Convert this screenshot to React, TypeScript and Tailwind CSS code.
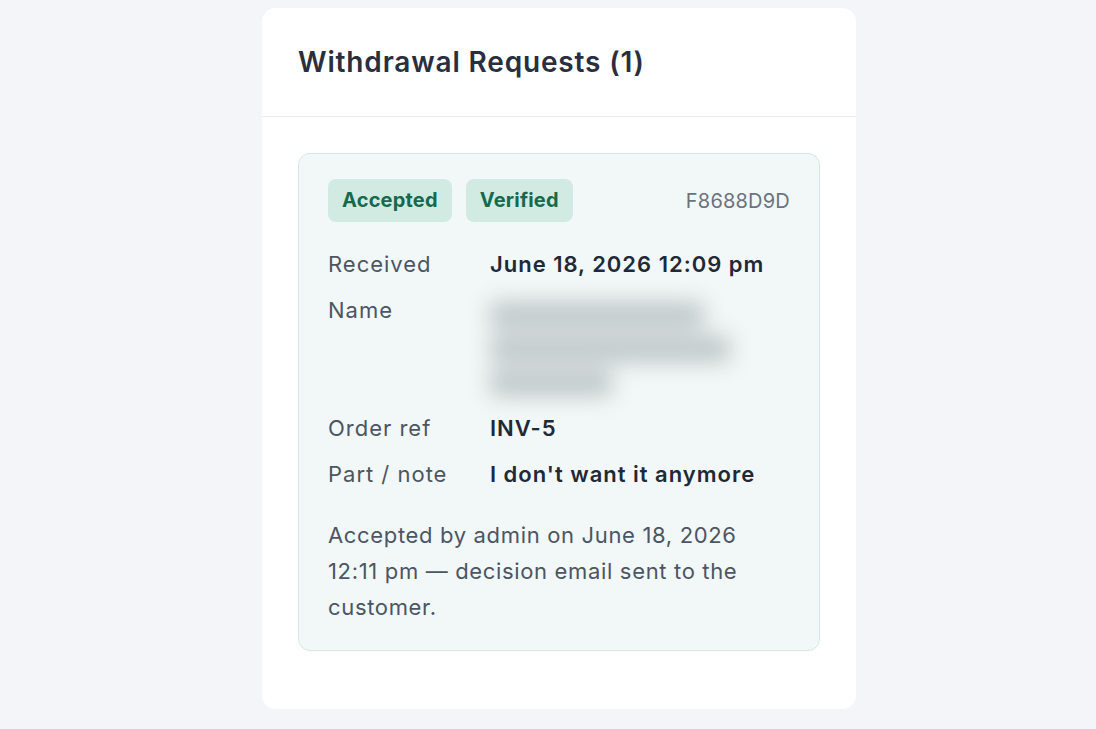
export default function App() {
  const rows = [
    { label: "Received", value: "June 18, 2026 12:09 pm" },
    { label: "Name", value: null },
    { label: "Order ref", value: "INV-5" },
    { label: "Part / note", value: "I don't want it anymore" },
  ];

  return (
    <div
      className="min-h-[729px] bg-[#f3f5f9] pt-2"
      style={{ fontFamily: "Inter, 'Noto Sans', sans-serif" }}
    >
      <div className="ml-[262px] w-[594px] rounded-[14px] bg-white">
        <div className="border-b border-[#e8ebef] px-9 pt-[36px] pb-[36px]">
          <h2 className="text-[28px] leading-[36px] font-semibold tracking-[0.03em] text-[#2a2f3f]">
            Withdrawal Requests (1)
          </h2>
        </div>

        <div className="px-9 pt-[36px] pb-[58px]">
          <div className="rounded-[12px] border border-[#d4e9e2] bg-[#f2f8f7] px-[29px] pt-[25px] pb-[25px]">
            {/* Badges + id */}
            <div className="flex items-center">
              <span className="rounded-[8px] bg-[#d2ebe2] px-[14px] py-[8px] text-[20px] leading-[27px] font-bold tracking-[0.01em] text-[#17694d]">
                Accepted
              </span>
              <span className="ml-[14px] rounded-[8px] bg-[#d2ebe2] px-[14px] py-[8px] text-[20px] leading-[27px] font-bold tracking-[0.01em] text-[#17694d]">
                Verified
              </span>
              <span className="ml-auto text-[20px] tracking-[0.01em] text-[#6b7280]">F8688D9D</span>
            </div>

            {/* Details */}
            <div className="mt-[24px] flex flex-col gap-[10px]">
              {rows.map((row) => (
                <div key={row.label} className="flex text-[22px] leading-[36px] tracking-[0.045em]">
                  <div className="w-[162px] shrink-0 text-[#4b5563]">{row.label}</div>
                  {row.value ? (
                    <div className="font-semibold text-[#1f2937]">{row.value}</div>
                  ) : (
                    <div className="h-[108px] w-[245px]">
                      {/* redacted name, blurred */}
                      <div className="flex flex-col gap-[8px] pt-[10px] blur-[11px]">
                        <span className="h-[26px] w-[214px] rounded bg-[#bfc6c7]" />
                        <span className="h-[26px] w-[240px] rounded bg-[#bfc6c7]" />
                        <span className="h-[26px] w-[122px] rounded bg-[#bfc6c7]" />
                      </div>
                    </div>
                  )}
                </div>
              ))}
            </div>

            <p className="mt-[25px] text-[22px] leading-[36px] tracking-[0.03em] text-[#4b5563]">
              Accepted by admin on June 18, 2026 12:11 pm — decision email sent to the
              customer.
            </p>
          </div>
        </div>
      </div>
    </div>
  );
}
